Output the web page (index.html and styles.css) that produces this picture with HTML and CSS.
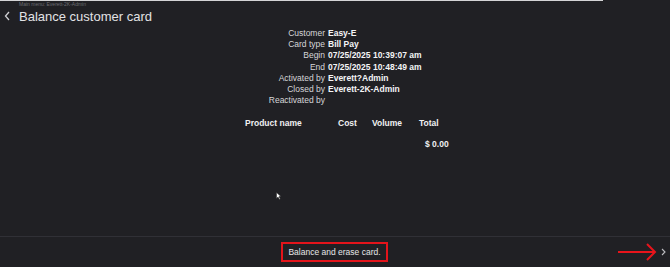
FILE: index.html
```html
<!DOCTYPE html>
<html>
<head>
	<meta charset="UTF-8" />
	<title>Balance customer card</title>
	<link rel="stylesheet" href="styles.css">
</head>
<body>
	<div class="page">
		<div class="progress"></div>
		<div class="crumb">Main menu: Everett-2K-Admin</div>
		<div class="titlebar">
			<svg class="back" width="6" height="10" viewBox="0 0 6 10"><path d="M5 1 L1.5 5 L5 9" fill="none" stroke="#cfcfd3" stroke-width="1.3"/></svg>
			<h1>Balance customer card</h1>
		</div>
		<div class="main">
			<div class="details">
				<span class="label">Customer</span><span class="value">Easy-E</span>
				<span class="label">Card type</span><span class="value">Bill Pay</span>
				<span class="label">Begin</span><span class="value">07/25/2025 10:39:07 am</span>
				<span class="label">End</span><span class="value">07/25/2025 10:48:49 am</span>
				<span class="label">Activated by</span><span class="value">Everett?Admin</span>
				<span class="label">Closed by</span><span class="value">Everett-2K-Admin</span>
				<span class="label">Reactivated by</span><span class="value"></span>
			</div>
			<div class="products">
				<span class="th">Product name</span><span class="th">Cost</span><span class="th">Volume</span><span class="th">Total</span>
				<span></span><span></span><span></span><span class="sum">$ 0.00</span>
			</div>
			<svg class="cursor" width="6" height="8" viewBox="0 0 6 8"><path d="M0.5 0.5 L0.5 6.5 L2 5 L3.5 7.5 L4.3 7 L3 4.6 L5 4.6 Z" fill="#fff" stroke="#222" stroke-width="0.5"/></svg>
		</div>
		<div class="footer">
			<div class="action">Balance and erase card.</div>
			<svg class="pointer" width="40" height="20" viewBox="0 0 40 20"><path d="M0 10 H37 M29 2 L37 10 L29 18" fill="none" stroke="#e8141b" stroke-width="2"/></svg>
			<svg class="next" width="5" height="8" viewBox="0 0 5 8"><path d="M1 1 L4 4 L1 7" fill="none" stroke="#bdbdc2" stroke-width="1.1"/></svg>
		</div>
	</div>
</body>
</html>
```
FILE: styles.css
```css
body {
	margin: 0;
	background-color: #202024;
	font-family: "Liberation Sans", Arial, sans-serif;
	color: #dcdcdf;
}
.page {
	width: 670px;
	height: 267px;
	display: flex;
	flex-direction: column;
	overflow: hidden;
}
.progress {
	width: 603px;
	height: 1px;
	background-color: #d4d4d6;
}
.crumb {
	font-size: 5px;
	line-height: 6px;
	color: #6c6c72;
	padding-left: 19px;
}
.titlebar {
	display: flex;
	align-items: center;
	height: 18px;
	gap: 9px;
	padding-left: 4px;
}
h1 {
	margin: 0;
	font-size: 13px;
	font-weight: normal;
	color: #e2e2e5;
}
.main {
	flex: 1;
	position: relative;
	padding-top: 3px;
}
.details {
	display: grid;
	grid-template-columns: 325px 1fr;
	column-gap: 3px;
	font-size: 8.5px;
	line-height: 11.2px;
}
.details .label {
	text-align: right;
	color: #d6d6d9;
}
.details .value {
	font-weight: bold;
	color: #f4f4f6;
}
.products {
	display: grid;
	grid-template-columns: 93px 34px 47px 40px;
	row-gap: 9px;
	margin-top: 11px;
	margin-left: 245px;
	font-size: 8.5px;
	line-height: 12px;
	font-weight: bold;
	color: #f0f0f2;
}
.products .sum {
	padding-left: 6px;
}
.cursor {
	position: absolute;
	left: 276px;
	top: 167px;
}
.footer {
	height: 30px;
	border-top: 1px solid #303036;
	display: flex;
	align-items: center;
	justify-content: center;
	position: relative;
}
.action {
	border: 2px solid #e3141b;
	padding: 0 5px;
	height: 16px;
	line-height: 16px;
	font-size: 8.5px;
	color: #e6e6e8;
	margin-left: -1px;
}
.pointer {
	position: absolute;
	left: 618px;
	top: 5px;
}
.next {
	position: absolute;
	right: 4px;
	top: 11px;
}
```
